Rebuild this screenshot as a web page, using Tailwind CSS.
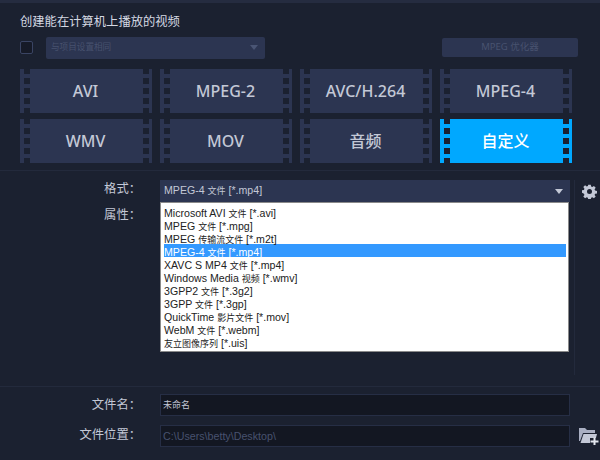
<!DOCTYPE html>
<html lang="zh-CN">
<head>
    <meta charset="UTF-8">
    <title>创建视频</title>
    <script src="https://cdn.jsdelivr.net/npm/@tailwindcss/browser@4"></script>
</head>
<body class="bg-[#1b2130] w-[600px] h-[460px] overflow-hidden font-['Noto_Sans','Noto_Sans_CJK_SC',sans-serif]">
    <div class="h-[3px] bg-[#252c40]"></div>

    <!-- Top section -->
    <section class="h-[168px] px-5 border-b border-[#232a3c]">
        <h2 class="pt-[10px] h-[34px] text-[12.3px] leading-[18px] text-[#d5d9e3]">创建能在计算机上播放的视频</h2>
        <div class="flex items-center h-[25px] mt-[-2px]">
            <div class="w-[13px] h-[13px] rounded-[2px] border border-[#3a4463] bg-[#161a27]"></div>
            <div class="ml-[13px] w-[219px] h-[22px] pl-[5px] pr-[5px] rounded-[2px] bg-[#2c3551] flex items-center justify-between text-[8.6px] text-[#48526f]">
                <span>与项目设置相同</span>
                <span class="w-0 h-0 border-x-[4px] border-x-transparent border-t-[5px] border-t-[#4a5574] mr-[2px]"></span>
            </div>
            <div class="ml-[177px] w-[136px] h-[19px] rounded-[2px] bg-[#2c3551] flex items-center justify-center text-[9.5px] text-[#48526f]">MPEG 优化器</div>
        </div>
        <div id="tiles" class="grid grid-cols-[repeat(4,132px)] gap-x-[8px] gap-y-[6px] mt-[9px]"></div>
    </section>

    <!-- Format -->
    <section class="h-[216px] border-b border-[#232a3c] flex">
        <div class="w-[141px] pt-[8px] text-right text-[12.3px] leading-[18px] text-[#c3c8d6]">
            <div class="h-[26px]">格式<span class="font-['Noto_Sans_CJK_TC']">：</span></div>
            <div>属性<span class="font-['Noto_Sans_CJK_TC']">：</span></div>
        </div>
        <div class="ml-[19px] w-[410px] pt-[9px] font-['Liberation_Sans','Noto_Sans_CJK_SC',sans-serif]">
            <div class="h-[22px] pl-[4px] pr-[7px] bg-[#2c3551] flex items-center justify-between text-[10.6px] text-[#c3c8d6]">
                <span>MPEG-4 <span class="text-[9px]">文件</span> [*.mp4]</span>
                <span class="w-0 h-0 border-x-[4px] border-x-transparent border-t-[5px] border-t-[#c3c8d6]"></span>
            </div>
            <ul class="w-[409px] h-[150px] pt-[2px] pl-[3px] pr-[2px] bg-white border border-[#8a8a8a] text-[10.6px] text-[#222]">
                <li class="h-[13px] leading-[17px]">Microsoft AVI <span class="text-[9px]">文件</span> [*.avi]</li>
                <li class="h-[13px] leading-[17px]">MPEG <span class="text-[9px]">文件</span> [*.mpg]</li>
                <li class="h-[13px] leading-[17px]">MPEG <span class="text-[9px]">传输流文件</span> [*.m2t]</li>
                <li class="h-[13px] leading-[17px] bg-[#3399ff] text-white">MPEG-4 <span class="text-[9px]">文件</span> [*.mp4]</li>
                <li class="h-[13px] leading-[17px]">XAVC S MP4 <span class="text-[9px]">文件</span> [*.mp4]</li>
                <li class="h-[13px] leading-[17px]">Windows Media <span class="text-[9px]">视频</span> [*.wmv]</li>
                <li class="h-[13px] leading-[17px]">3GPP2 <span class="text-[9px]">文件</span> [*.3g2]</li>
                <li class="h-[13px] leading-[17px]">3GPP <span class="text-[9px]">文件</span> [*.3gp]</li>
                <li class="h-[13px] leading-[17px]">QuickTime <span class="text-[9px]">影片文件</span> [*.mov]</li>
                <li class="h-[13px] leading-[17px]">WebM <span class="text-[9px]">文件</span> [*.webm]</li>
                <li class="h-[13px] leading-[17px]"><span class="text-[9px]">友立图像序列</span> [*.uis]</li>
            </ul>
        </div>
        <div class="ml-[4px] mt-[9px] h-[195px] w-px bg-[#232a3c]"></div>
        <div class="ml-[7px] mt-[13px]">
            <svg width="15" height="15" viewBox="0 0 24 24" fill="#c3c8d6"><path fill-rule="evenodd" d="M10 1h4l.6 3.1 1.900.8 2.600-1.800 2.800 2.800-1.800 2.600.8 1.900 3.100.6v4l-3.100.6-.8 1.900 1.800 2.600-2.800 2.800-2.600-1.800-1.900.8-.6 3.100h-4l-.6-3.100-1.900-.8-2.600 1.800-2.800-2.800 1.800-2.600-.8-1.900L0 14v-4l3.100-.6.8-1.900L2.100 4.900l2.800-2.800 2.600 1.800 1.900-.8zM12 8a4 4 0 1 0 0 8 4 4 0 0 0 0-8z"/></svg>
        </div>
    </section>

    <!-- File name and location -->
    <section class="pt-[7px] text-[12.3px] text-[#c3c8d6]">
        <div class="flex items-center h-[22px]">
            <div class="w-[141px] text-right">文件名<span class="font-['Noto_Sans_CJK_TC']">：</span></div>
            <div class="ml-[19px] w-[410px] h-[22px] pl-[2px] flex items-center bg-[#131722] border border-[#262e45] text-[9px] text-[#c3c8d6]">未命名</div>
        </div>
        <div class="flex items-center h-[22px] mt-[9px]">
            <div class="w-[141px] text-right pb-[2px]">文件位置<span class="font-['Noto_Sans_CJK_TC']">：</span></div>
            <div class="ml-[19px] w-[410px] h-[22px] pl-[2px] flex items-center bg-[#131722] border border-[#262e45] text-[10.7px] font-['Liberation_Sans'] text-[#48526f]">C:\Users\betty\Desktop\</div>
            <svg class="ml-[9px]" width="20" height="18" viewBox="0 0 20 18">
                <path fill="#a9afc2" d="M0 1h6l2 2h8v3H4L1 14H0z"/>
                <path fill="#c3c8d6" d="M4.500 7H18l-2.500 9H1.500z"/>
                <path fill="#1b2130" d="M11 11h8v7h-8z"/>
                <path fill="#e4e7ee" d="M14.500 10.500h2v3h3v2h-3v2.500h-2v-2.500h-3v-2h3z"/>
            </svg>
        </div>
    </section>

    <script>
        const tiles = ["AVI", "MPEG-2", "AVC/H.264", "MPEG-4", "WMV", "MOV", "音频", "自定义"];
        document.getElementById("tiles").innerHTML = tiles.map(name => {
            const colors = name === "自定义" ? "bg-[#00a8ff] text-white" : "bg-[#2c3551] text-[#c3c8d6]";
            return `
                <div class="flex h-[44px] ${colors}">
                    <div class="w-[10px] pl-[4px]"><div class="h-full bg-[repeating-linear-gradient(#1b2130_0_5px,transparent_5px_9px,#1b2130_9px_10px)]"></div></div>
                    <div class="flex-1 pr-[2px] flex items-center justify-center text-[16px] font-medium">${name}</div>
                    <div class="w-[9px] pr-[3px]"><div class="h-full bg-[repeating-linear-gradient(#1b2130_0_5px,transparent_5px_9px,#1b2130_9px_10px)]"></div></div>
                </div>`;
        }).join("");
    </script>
</body>
</html>
